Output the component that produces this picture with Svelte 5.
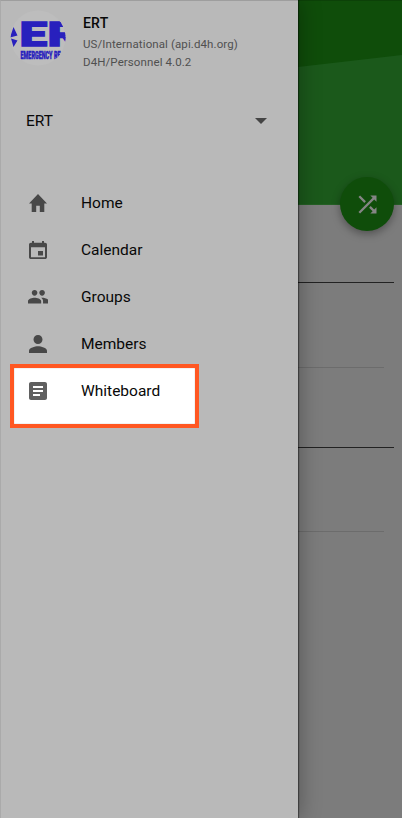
<script>
  const items = [
    { label: 'Home', icon: 'M10 20v-6h4v6h5v-8h3L12 3 2 12h3v8z', box: '2 3 20 17', w: 18, h: 18 },
    { label: 'Calendar', icon: 'M17 12h-5v5h5v-5zM16 1v2H8V1H6v2H5c-1.110 0-1.990.9-1.990 2L3 19c0 1.100.890 2 2 2h14c1.100 0 2-.9 2-2V5c0-1.100-.9-2-2-2h-1V1h-2zm3 18H5V8h14v11z', box: '3 1 18 20', w: 18, h: 18 },
    { label: 'Groups', icon: 'M16 11c1.660 0 2.990-1.340 2.990-3S17.660 5 16 5s-3 1.340-3 3 1.340 3 3 3zm-8 0c1.660 0 2.990-1.340 2.990-3S9.660 5 8 5 5 6.340 5 8s1.340 3 3 3zm0 2c-2.330 0-7 1.170-7 3.500V19h14v-2.500c0-2.330-4.670-3.500-7-3.500zm8 0c-.29 0-.62.02-.97.05 1.160.84 1.970 1.970 1.970 3.450V19h6v-2.500c0-2.330-4.670-3.500-7-3.500z', box: '1 5 22 14', w: 20.7, h: 13.4 },
    { label: 'Members', icon: 'M12 12c2.210 0 4-1.790 4-4s-1.790-4-4-4-4 1.790-4 4 1.790 4 4 4zm0 2c-2.670 0-8 1.340-8 4v2h16v-2c0-2.660-5.330-4-8-4z', box: '4 4 16 16', w: 18, h: 18 },
    { label: 'Whiteboard', icon: 'M19 3H5c-1.100 0-2 .9-2 2v14c0 1.100.9 2 2 2h14c1.100 0 2-.9 2-2V5c0-1.100-.9-2-2-2zm-5 14H7v-2h7v2zm3-4H7v-2h10v2zm0-4H7V7h10v2z', box: '3 3 18 18', w: 18, h: 18, marked: true }
  ];
</script>

<div class="screen">
  <aside>
    <header>
      <svg class="avatar" viewBox="0 0 56 56">
        <defs><clipPath id="disc"><circle cx="28" cy="28" r="27.500" /></clipPath></defs>
        <circle cx="28" cy="28" r="27.500" fill="#bdbdbd" />
        <g clip-path="url(#disc)" fill="#2820bd" stroke="#2820bd">
          <path d="M3.500 17 L7.500 25.500 L0 27.500zM1 28.500l6.500 2-4 6.500z" stroke="none" />
          <text transform="translate(9.700 35.700) scale(1.500 1)" x="0 18.700" y="0" font-size="32.500" stroke-width="1.400">ER</text>
          <text x="10.500" y="49.300" font-size="11.500" stroke-width=".5" textLength="40" lengthAdjust="spacingAndGlyphs">EMERGENCY RE</text>
        </g>
      </svg>
      <div class="account">
        <strong>ERT</strong>
        <span>US/International (api.d4h.org)</span>
        <span>D4H/Personnel 4.0.2</span>
      </div>
    </header>
    <div class="team"><span>ERT</span><i></i></div>
    <nav>
      {#each items as item}
        <div class="item" class:marked={item.marked}>
          <span class="icon">
            <svg viewBox={item.box} width={item.w} height={item.h} preserveAspectRatio="none"><path d={item.icon} /></svg>
          </span>
          <span class="label">{item.label}</span>
        </div>
      {/each}
    </nav>
  </aside>
  <main>
    <div class="hero"></div>
    <div class="rule dark first"></div>
    <div class="rule light"></div>
    <div class="rule dark"></div>
    <div class="rule light last"></div>
    <div class="fab">
      <svg viewBox="0 0 24 24"><path d="M10.590 9.170L5.410 4 4 5.410l5.170 5.170 1.420-1.410zM14.500 4l2.040 2.040L4 18.590 5.410 20 17.960 7.460 20 9.500V4h-5.500zm.33 9.410l-1.410 1.410 3.130 3.130L14.500 20H20v-5.500l-2.040 2.040-3.130-3.130z" /></svg>
    </div>
  </main>
</div>

<style>
  .screen {
    display: flex;
    position: relative;
    width: 402px;
    height: 818px;
    overflow: hidden;
    background: #7c7c7c;
    font-family: Roboto, sans-serif;
    color: #080808;
  }
  .screen::after {
    content: '';
    position: absolute;
    z-index: 2;
    inset: 0;
    border-top: 1px solid rgba(0, 0, 0, 0.14);
    border-left: 1px solid rgba(0, 0, 0, 0.08);
    pointer-events: none;
  }
  aside {
    position: relative;
    z-index: 1;
    box-sizing: border-box;
    width: 298px;
    flex: none;
    background: #b9b9b9;
    box-shadow: 1px 0 1px rgba(0, 0, 0, 0.4), 2px 0 20px rgba(0, 0, 0, 0.3);
  }
  header {
    display: flex;
    height: 98px;
  }
  .avatar {
    width: 56px;
    height: 56px;
    margin: 10px 0 0 10px;
    font-family: Roboto, sans-serif;
    font-weight: 900;
  }
  .account {
    display: flex;
    flex-direction: column;
    padding: 14px 0 0 17px;
    font-size: 11.5px;
    line-height: 18px;
    letter-spacing: 0.1px;
    color: #505050;
  }
  .account strong {
    height: 21px;
    font-size: 14px;
    font-weight: 500;
    letter-spacing: 0.2px;
    color: #080808;
  }
  .account span { white-space: nowrap; }
  .team {
    display: flex;
    align-items: center;
    justify-content: space-between;
    height: 46px;
    padding: 0 31px 0 26px;
    font-size: 15.5px;
  }
  .team i {
    border: 6px solid transparent;
    border-top-color: #444;
    border-bottom: 0;
  }
  nav { padding-top: 36px; }
  .item {
    position: relative;
    display: flex;
    align-items: center;
    height: 47px;
    padding-left: 26px;
    font-size: 15.5px;
  }
  .icon, .label { position: relative; }
  .label { padding-bottom: 1px; }
  .icon {
    display: flex;
    justify-content: center;
    width: 24px;
    margin-right: 31px;
    padding-bottom: 1px;
  }
  .icon svg {
    flex: none;
    fill: #484848;
  }
  .marked::before {
    content: '';
    position: absolute;
    left: 10px;
    top: -4px;
    box-sizing: border-box;
    width: 189px;
    height: 64px;
    border: 4px solid #ff5722;
    background: #fff;
    box-shadow: inset 0 0 1px #777;
  }
  .marked .icon svg { fill: #606060; }
  main {
    position: relative;
    flex: 1;
  }
  .hero {
    height: 205px;
    box-sizing: border-box;
    border-bottom: 1px solid #246024;
    background: #1b591b;
  }
  .hero::before {
    content: '';
    display: block;
    height: 67px;
    background: #0f4d0a;
    clip-path: polygon(0 0, 100% 0, 100% 55px, 0 67px);
  }
  .rule { height: 1px; }
  .dark {
    margin-right: 8px;
    background: #222;
  }
  .light {
    margin: 84px 18px 79px 0;
    background: #6c6c6c;
  }
  .first { margin-top: 77px; }
  .last { margin-top: 83px; }
  .fab {
    position: absolute;
    left: 42px;
    top: 177px;
    display: flex;
    align-items: center;
    justify-content: center;
    width: 54px;
    height: 54px;
    border-radius: 50%;
    background: #0f4d0a;
    box-shadow: 0 3px 9px rgba(0, 0, 0, 0.35);
  }
  .fab svg {
    width: 27px;
    fill: #858585;
  }
</style>
